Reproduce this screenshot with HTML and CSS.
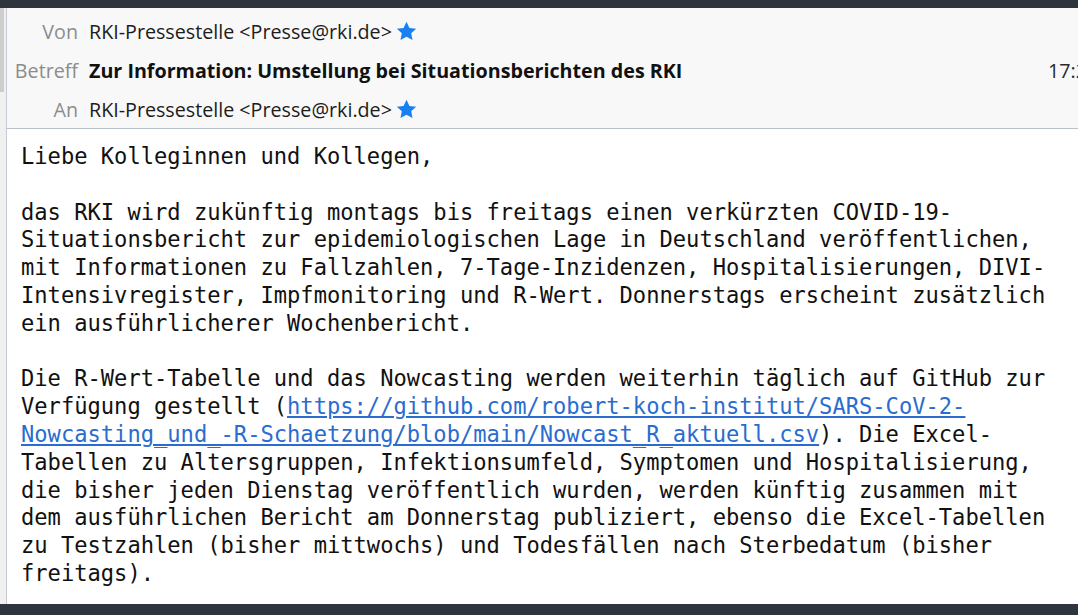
FILE: index.html
```html
<!DOCTYPE html>
<html lang="de">
<head>
<meta charset="utf-8">
<title>Zur Information: Umstellung bei Situationsberichten des RKI</title>
<link rel="stylesheet" href="styles.css">
</head>
<body>
<div class="app">
  <div class="topbar"></div>
  <div class="middle">
    <div class="side"><div class="thumb"></div></div>
    <div class="pane">
      <div class="header">
        <div class="row">
          <span class="label">Von</span>
          <span class="value">RKI-Pressestelle &lt;Presse@rki.de&gt;</span>
          <svg class="star" viewBox="0 0 24 24" width="23" height="23"><path d="M12 1.8l3.05 6.45 7.05.85-5.2 4.85 1.38 6.97L12 17.5l-6.28 3.42 1.38-6.97L1.9 9.1l7.05-.85z"/></svg>
        </div>
        <div class="row">
          <span class="label">Betreff</span>
          <span class="value subject">Zur Information: Umstellung bei Situationsberichten des RKI</span>
          <span class="time">17:25</span>
        </div>
        <div class="row">
          <span class="label">An</span>
          <span class="value">RKI-Pressestelle &lt;Presse@rki.de&gt;</span>
          <svg class="star" viewBox="0 0 24 24" width="23" height="23"><path d="M12 1.8l3.05 6.45 7.05.85-5.2 4.85 1.38 6.97L12 17.5l-6.28 3.42 1.38-6.97L1.9 9.1l7.05-.85z"/></svg>
        </div>
      </div>
      <div class="body">
<div class="text">Liebe Kolleginnen und Kollegen,

das RKI wird zukünftig montags bis freitags einen verkürzten COVID-19-
Situationsbericht zur epidemiologischen Lage in Deutschland veröffentlichen,
mit Informationen zu Fallzahlen, 7-Tage-Inzidenzen, Hospitalisierungen, DIVI-
Intensivregister, Impfmonitoring und R-Wert. Donnerstags erscheint zusätzlich
ein ausführlicherer Wochenbericht.

Die R-Wert-Tabelle und das Nowcasting werden weiterhin täglich auf GitHub zur
Verfügung gestellt (<a class="link" href="#">https://github.com/robert-koch-institut/SARS-CoV-2-
Nowcasting_und_-R-Schaetzung/blob/main/Nowcast_R_aktuell.csv</a>). Die Excel-
Tabellen zu Altersgruppen, Infektionsumfeld, Symptomen und Hospitalisierung,
die bisher jeden Dienstag veröffentlich wurden, werden künftig zusammen mit
dem ausführlichen Bericht am Donnerstag publiziert, ebenso die Excel-Tabellen
zu Testzahlen (bisher mittwochs) und Todesfällen nach Sterbedatum (bisher
freitags).</div>
      </div>
    </div>
  </div>
  <div class="bottombar"></div>
</div>
</body>
</html>
```
FILE: styles.css
```css
html, body {
  margin: 0;
  padding: 0;
  overflow: hidden;
}
body {
  background: #f0f0f0;
}
.app {
  display: flex;
  flex-direction: column;
  height: 615px;
  width: 1078px;
  overflow: hidden;
}
.topbar {
  height: 8px;
  background: #2e353e;
  flex: none;
}
.bottombar {
  height: 11px;
  background: #2e353e;
  flex: none;
}
.middle {
  flex: 1;
  display: flex;
  min-height: 0;
}
.side {
  width: 6px;
  flex: none;
  background: #f0f0f0;
}
.thumb {
  width: 4px;
  height: 84px;
  background: #cdcdcd;
}
.pane {
  flex: 1;
  min-width: 0;
  border-left: 1px solid #c3cad2;
  display: flex;
  flex-direction: column;
}
.header {
  background: #f8f8f8;
  border-bottom: 1px solid #b9c2ca;
  padding-top: 4px;
  height: 116px;
  flex: none;
  font-family: "Open Sans", "Noto Sans", sans-serif;
  font-size: 19.7px;
  overflow: hidden;
}
.row {
  display: flex;
  align-items: center;
  height: 39px;
  white-space: nowrap;
}
.label {
  width: 71px;
  flex: none;
  text-align: right;
  color: #8c8c8c;
  margin-right: 11px;
}
.value {
  color: #1c1c1c;
}
.subject {
  font-weight: 700;
  color: #111;
}
.time {
  margin-left: auto;
  width: 30px;
  flex: none;
  overflow: visible;
  color: #2a2a2a;
}
.star {
  fill: #1a80f2;
  margin-left: 3px;
  flex: none;
}
.body {
  flex: 1;
  background: #ffffff;
  padding: 14px 0 0 14px;
  overflow: hidden;
}
.text {
  font-family: "DejaVu Sans Mono", "Liberation Mono", monospace;
  font-size: 22.1px;
  line-height: 27.8px;
  color: #111;
  white-space: pre;
}
.link {
  color: #2a6ccf;
  text-decoration: underline;
}
```
